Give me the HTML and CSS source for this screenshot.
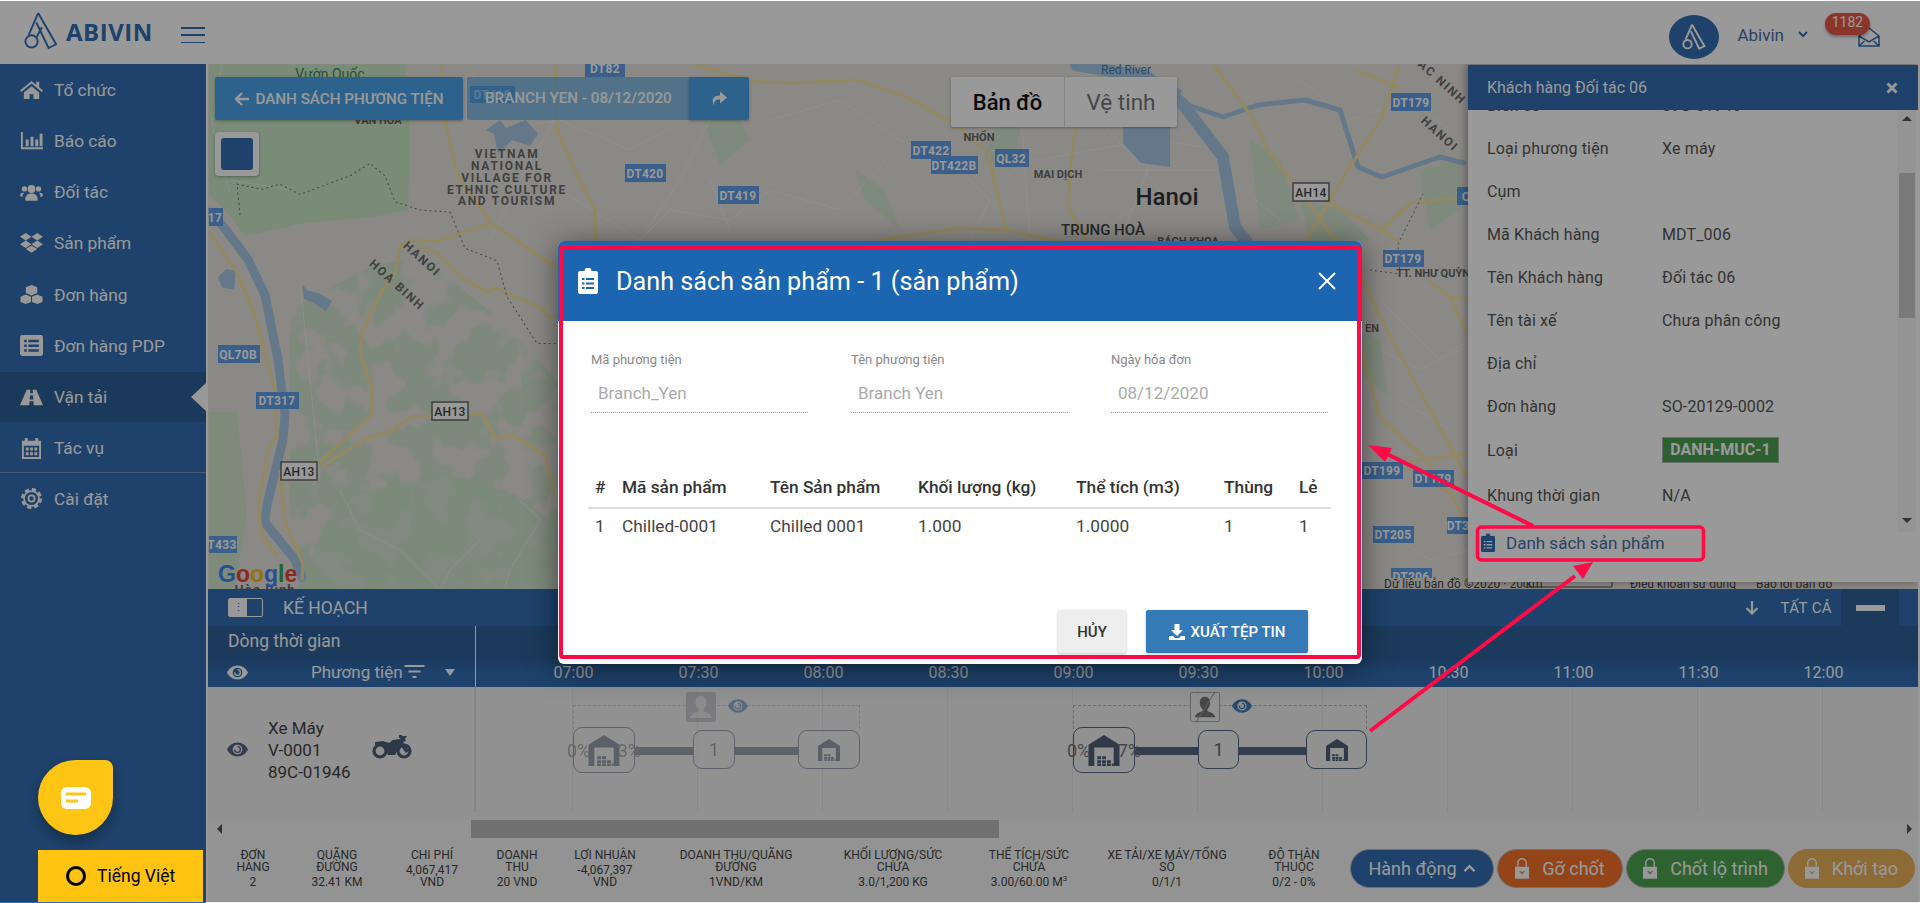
FILE: index.html
```html
<!DOCTYPE html>
<html lang="vi">
<head>
<meta charset="utf-8">
<title>Abivin</title>
<link rel="stylesheet" href="styles.css">
</head>
<body>
<svg class="defs" width="0" height="0" aria-hidden="true">
  <symbol id="i-clip" viewBox="0 0 20 26"><path fill-rule="evenodd" d="M2 3h4.5a3.5 3.5 0 0 1 7 0H18a2 2 0 0 1 2 2v19a2 2 0 0 1-2 2H2a2 2 0 0 1-2-2V5a2 2 0 0 1 2-2zM4 10v2h2.5v-2zM8 10v2h8v-2zM4 14.5v2h2.500v-2zM8 14.500v2h8v-2zM4 19v2h2.500v-2zM8 19v2h8v-2z"/></symbol>
  <symbol id="i-eye" viewBox="0 0 24 16"><path fill-rule="evenodd" d="M12 0c5.500 0 9.800 3.500 12 8-2.200 4.500-6.500 8-12 8S2.200 12.500 0 8c2.200-4.500 6.500-8 12-8zm0 2.500a5.500 5.500 0 1 0 0 11 5.500 5.500 0 0 0 0-11z"/><path d="M12 4a4 4 0 1 1-4 4h1.500A2.500 2.500 0 1 0 12 5.500z"/></symbol>
  <symbol id="i-house" viewBox="0 0 32 32"><path d="M16 0l16 10v22h-6V13H6v19H0V10z"/><path d="M9 22h4v3H9zM14 22h4v3h-4zM9 26h4v3H9zM14 26h4v3h-4zM19 26h4v3h-4zM9 29.500h4V32H9zM14 29.500h4V32h-4zM19 29.500h4V32h-4zM24 29.500h2V32h-2z"/></symbol>
  <symbol id="i-person" viewBox="0 0 30 30"><path d="M15 4c3.500 0 5.500 2.700 5.500 6.500 0 3-1.200 5.500-3 6.800v2.200c3 1 7.500 2 8.500 6.500H4c1-4.500 5.500-5.500 8.500-6.500v-2.200c-1.800-1.300-3-3.800-3-6.800C9.500 6.700 11.500 4 15 4z"/></symbol>
  <symbol id="i-lock" viewBox="0 0 15 22"><path fill="none" stroke="currentColor" stroke-width="1.500" d="M3 9V5a4.500 4.500 0 0 1 9 0v4"/><path d="M0 9h15v13H0zM4.500 14l3 3.500 3-3.500-1-.5-2 2-2-2z" fill-rule="evenodd"/></symbol>
</svg>

<div class="app">
  <header class="topbar">
    <svg class="logo" viewBox="0 0 36 40"><g fill="none" stroke="#326eb2" stroke-width="2"><path d="M15 1L5 24"/><path d="M15 1l19 33-8 4L13 11"/><circle cx="8" cy="31" r="6.500"/><path d="M13 27l6-11"/></g></svg>
    <span class="brand">ABIVIN</span>
    <button class="burger" aria-label="menu"><i></i><i></i><i></i></button>
    <div class="user">
      <span class="avatar"><svg viewBox="0 0 36 40"><g fill="none" stroke="#fff" stroke-width="3"><path d="M15 1L5 24"/><path d="M15 1l19 33-8 4L13 11"/><circle cx="8" cy="31" r="6.500"/></g></svg></span>
      <span class="user-name">Abivin</span>
      <svg class="chev" viewBox="0 0 10 7"><path d="M1 1l4 4 4-4" fill="none" stroke="#326eb2" stroke-width="2"/></svg>
      <span class="mail">
        <svg viewBox="0 0 22 20"><path d="M1 9l10-8 10 8v10H1zM1 9l10 6 10-6M1 19l7-6.500M21 19l-7-6.500" fill="none" stroke="#326eb2" stroke-width="1.500"/></svg>
        <b class="mail-count">1182</b>
      </span>
    </div>
  </header>

  <div class="main">
    <nav class="side">
      <a class="nav"><svg viewBox="0 0 24 20"><path d="M12 1L0 11l1.300 1.600L12 3.700l10.700 8.900L24 11l-4-3.300V2h-3v3.200zM4 13v7h6v-5h4v5h6v-7l-8-6.500z"/></svg>Tổ chức</a>
      <a class="nav"><svg viewBox="0 0 24 20"><path d="M1 1h2v16h21v2H1zM6 9h3v7H6zM11 6h3v10h-3zM16 9h3v7h-3zM20.500 3h3v13h-3z"/></svg>Báo cáo</a>
      <a class="nav"><svg viewBox="0 0 26 18"><circle cx="5" cy="5" r="3"/><circle cx="21" cy="5" r="3"/><circle cx="13" cy="5" r="4.500"/><path d="M6 18c-.5-5 2-8 7-8s7.500 3 7 8c-2 .5-12 .5-14 0zM4.500 9.500C3 11 3 12 3 14c-1.500 0-3-.5-3-1.500 0-2 1.500-3.500 4.500-3zM21.500 9.500c3-.5 4.500 1 4.500 3 0 1-1.500 1.500-3 1.500 0-2 0-3-1.500-4.500z"/></svg>Đối tác</a>
      <a class="nav"><svg viewBox="0 0 22 20"><path d="M5.500 0L0 3.600l5.500 3.500L11 3.600zM16.500 0L11 3.600l5.500 3.500L22 3.600zM0 10.600l5.500 3.600L11 10.600 5.500 7.100zM16.500 14.200L22 10.600l-5.500-3.500-5.500 3.500zM5.500 15.300L11 11.800l5.500 3.500L11 18.900z"/></svg>Sản phẩm</a>
      <a class="nav"><svg viewBox="0 0 24 20"><path d="M12 0l6 2.500v6L12 11 6 8.500v-6zM6 10l5.500 2.300v5.400L6 20 .5 17.700v-5.400zM18 10l5.500 2.300v5.400L18 20l-5.500-2.300v-5.400z"/></svg>Đơn hàng</a>
      <a class="nav"><svg viewBox="0 0 22 20"><path fill-rule="evenodd" d="M2 0h18a2 2 0 0 1 2 2v16a2 2 0 0 1-2 2H2a2 2 0 0 1-2-2V2a2 2 0 0 1 2-2zM4 4.500v2.500h2.500V4.500zM8 4.500v2.500h10V4.500zM4 9v2.500h2.500V9zM8 9v2.500h10V9zM4 13.500V16h2.500v-2.500zM8 13.500V16h10v-2.500z"/></svg>Đơn hàng PDP</a>
      <a class="nav active"><svg viewBox="0 0 24 16"><path fill-rule="evenodd" d="M7 0h3.800l-.2 3.500h2.800L13.200 0H17l7 16h-9.600l-.4-4h-4l-.4 4H0zM10.400 6l-.3 4h3.800l-.3-4z"/></svg>Vận tải</a>
      <a class="nav"><svg viewBox="0 0 20 22"><path fill-rule="evenodd" d="M3 0h3v3h8V0h3v3h3v19H0V3h3zM2 8v12h16V8zM4 10h3v3H4zM8.500 10h3v3h-3zM13 10h3v3h-3zM4 15h3v3H4zM8.500 15h3v3h-3zM13 15h3v3h-3z"/></svg>Tác vụ</a>
      <div class="nav-line"></div>
      <a class="nav"><svg viewBox="0 0 24 24"><circle cx="12" cy="12" r="8.500" fill="none" stroke="currentColor" stroke-width="2"/><circle cx="12" cy="12" r="10.500" fill="none" stroke="currentColor" stroke-width="3" stroke-dasharray="5 3.250"/><circle cx="12" cy="12" r="3.500" fill="none" stroke="currentColor" stroke-width="2"/></svg>Cài đặt</a>
    </nav>

    <div class="work">
      <section class="map">
        <svg class="map-art" viewBox="208 64 1710 525" width="1710" height="525">
          <defs>
            <filter id="mottle" x="0" y="0" width="100%" height="100%" color-interpolation-filters="sRGB">
              <feTurbulence type="fractalNoise" baseFrequency=".03" numOctaves="3" seed="7"/>
              <feColorMatrix values="0 0 0 0 .80  0 0 0 0 .90  0 0 0 0 .79  0 0 0 9 -3.900"/>
              <feComposite in2="SourceGraphic" operator="in"/>
            </filter>
          </defs>
          <rect x="208" y="64" width="1710" height="525" fill="#e6e4df"/>
          <g transform="translate(0,-2.070) scale(1,1.0345)">
            <path class="green" d="M209 64H405l5 66-2 75-38 7-70 6-30 7-25 5-20-25-16-15z"/>
            <path class="green2" d="M209 400l28 0 10 100-15 89h-23z"/>
            <path class="mottled" filter="url(#mottle)" opacity=".8" d="M290 300l80-40 50-10 80 60 58 60v219H300l-10-100z"/>
            <path class="green" d="M345 480l100-20 70 20 43 30v79H300l15-60z" opacity=".55"/>
          </g>
          <path class="green" d="M1000 110l20 20-10 40-25-10zM700 110l30-10 20 40-30 25zM855 170l30 20 15 40-35-30zM1250 140l30 20 20 60-40 10zM1300 200l40 10 30 30-60 2zM1360 330l20 10 8 55-28-20zM1420 170l40-10v50l-30 20z" opacity=".7"/>
          <g class="minor">
            <path d="M222 64l-10 60 8 30 10 40M230 180l60 10M470 70l30 60 60-10 70 30 45-25M560 190l80 50 30-30 60 10 40-30 70 20 55-60M710 180l20 50M640 240l40-60 20-40 20-40M770 120l70-20 60 40 50 20 40 40-20 42M990 150l50 10 50-10 70-10 60 10M1020 100l10 140M1060 70l40 50 60 70-60 40M1100 170h120l60 50M1170 110l-30 80-20 50M1300 80l50 40 60-20 40 30M1380 300l60 60 30-15M1380 350l40 20 50-30M1400 400l50 30M1370 520l60 40 40-10M560 110l-40 70-30 60M300 280l20 200M340 490l20 40 40 20 40 40M480 540l-30 30-10 19M520 500l20 20-30 50-5 19"/>
          </g>
          <g class="water-fill">
            <path d="M1123 127h47v40l-29-4-18-20zM500 120l6 8 20-8 12 14-8 12-18-6-14 14-4-20-8-4zM1160 80l22 10-6 20-18-10z"/>
            <g transform="translate(0,-2.070) scale(1,1.0345)"><path d="M302 277l6 6 10 2 14 8-6 10-12-8-10-4zM226 262l10 2-2 18-12-2-4-10z"/></g>
          </g>
          <g class="water">
            <g transform="translate(0,-2.070) scale(1,1.0345)"><path class="w10" d="M210 207l15 16 23 30 17 34 13 63 7 53-2 24-16 63-2 17 30 36 7 17"/></g>
            <path class="w12" d="M1076 65l71 12 35 26 41 54 12 70 12 15"/>
            <path class="w6" d="M1182 103l41 14 35-12 47-5 35 10 18 57 24 10 58-20 24 6"/>
          </g>
          <g class="road">
            <g transform="translate(0,-2.070) scale(1,1.0345)">
              <path d="M210 227l28 40 17 40 20 73 2 43-9 14-10 53 4 30 15 20"/>
              <path d="M280 457l5 50 18 40-1 16"/>
              <path d="M318 450l54-47v-26l-12-34 2-20 20-40 13-16 5-27 12-6 26 1 54-17-34-45-13-53-3-55"/>
              <path d="M492 218l66 44"/>
              <path d="M322 453l43-26 27-9 20-13 70-3 13 23 17-3 33 21 10 37"/>
              <path d="M418 240l20 7 24 23 26 15 7-5 47 20 6 8h10"/>
            </g>
            <path d="M555 65l2 65 18 40 20 40v30"/>
            <path d="M695 65l29 8 36 9 35 1 64-3 47 17 47 26 35 30 18 77"/>
            <path d="M877 240l82-12 47 2 59 12"/>
            <path d="M1076 127l-5 33-3 47 20 35"/>
            <path d="M1214 65l38 52 18 36 23 30 88 47 18 12"/>
            <path d="M1399 65l-17 52-36 56-41 69"/>
            <path d="M1458 198l-47 5-30 27"/>
            <path d="M1293 183l67 90 20 44 43 80 44 80"/>
            <path d="M1360 343l20 74 50 46 7 24 13 6 13 24"/>
            <path d="M1403 463l64-10"/>
            <path d="M1428 280l22 17 17 36M1450 297l18 2"/>
            <path d="M1355 70l20 8 25 10"/>
          </g>
          <g class="border" transform="translate(0,-2.070) scale(1,1.0345)">
            <path d="M240 210l-3-30 25 5 18-5 20 10 50-18 20-12 15 12 10 25 25 8 30 2 15 35 32 12 10 35 30 45 40 0 22 30 25 15"/>
          </g>
          <g class="border"><path d="M1370 270l30 4-2-30 25-50"/></g>
          <g class="shield">
            <rect x="585" y="60" width="40" height="17"/><text x="605" y="73">DT82</text>
            <rect x="470" y="86" width="45" height="17"/><text x="492" y="99">DT416</text>
            <rect x="625" y="164" width="41" height="18"/><text x="645" y="178">DT420</text>
            <rect x="718" y="186" width="41" height="18"/><text x="738" y="200">DT419</text>
            <rect x="209" y="208" width="14" height="18"/><text x="215" y="222">17</text>
            <rect x="218" y="345" width="42" height="18"/><text x="238" y="359">QL70B</text>
            <rect x="256" y="392" width="43" height="17"/><text x="277" y="405">DT317</text>
            <rect x="209" y="536" width="28" height="17"/><text x="222" y="549">T433</text>
            <rect x="911" y="141" width="40" height="18"/><text x="931" y="155">DT422</text>
            <rect x="931" y="156" width="47" height="18"/><text x="954" y="170">DT422B</text>
            <rect x="995" y="149" width="34" height="18"/><text x="1011" y="163">QL32</text>
            <rect x="1391" y="93" width="40" height="18"/><text x="1411" y="107">DT179</text>
            <rect x="1457" y="187" width="18" height="18"/><text x="1466" y="201">Q</text>
            <rect x="1383" y="250" width="41" height="17"/><text x="1403" y="263">DT179</text>
            <rect x="1362" y="462" width="41" height="17"/><text x="1382" y="475">DT199</text>
            <rect x="1413" y="470" width="41" height="17"/><text x="1433" y="483">DT179</text>
            <rect x="1373" y="526" width="41" height="17"/><text x="1393" y="539">DT205</text>
            <rect x="1447" y="517" width="22" height="17"/><text x="1458" y="530">DT3</text>
            <rect x="1391" y="568" width="41" height="17"/><text x="1411" y="581">DT206</text>
          </g>
          <g class="shield ah">
            <rect x="281" y="462" width="36" height="18"/><text x="299" y="476">AH13</text>
            <rect x="432" y="402" width="36" height="18"/><text x="450" y="416">AH13</text>
            <rect x="1293" y="183" width="36" height="18"/><text x="1311" y="197">AH14</text>
          </g>
          <g class="place">
            <text x="330" y="79" class="park">Vườn Quốc</text>
            <text x="378" y="124">VĂN HÓA</text>
            <text x="507" y="158" class="spaced">VIETNAM</text>
            <text x="507" y="170" class="spaced">NATIONAL</text>
            <text x="507" y="182" class="spaced">VILLAGE FOR</text>
            <text x="507" y="194" class="spaced">ETHNIC CULTURE</text>
            <text x="507" y="205" class="spaced">AND TOURISM</text>
            <text x="422" y="263" class="spaced" transform="rotate(42 422 259)">HANOI</text>
            <text x="397" y="289" class="spaced" transform="rotate(42 397 285)">HOA BINH</text>
            <text x="979" y="141">NHỔN</text>
            <text x="1058" y="178">MAI DỊCH</text>
            <text x="1167" y="205" class="city">Hanoi</text>
            <text x="1103" y="235" class="big">TRUNG HOÀ</text>
            <text x="1188" y="245">BÁCH KHOA</text>
            <text x="1126" y="74" class="river">Red River</text>
            <text x="1437" y="277">TT. NHƯ QUỲNH</text>
            <text x="1372" y="332">EN</text>
            <text x="1436" y="82" class="spaced" transform="rotate(42 1436 82)">BẮC NINH</text>
            <text x="1437" y="137" class="spaced" transform="rotate(42 1437 137)">HANOI</text>
            <text x="265" y="594" class="hoa">Hòa Bình</text>
          </g>
          <text class="google" x="218" y="582"><tspan fill="#4285f4">G</tspan><tspan fill="#ea4335">o</tspan><tspan fill="#fbbc05">o</tspan><tspan fill="#4285f4">g</tspan><tspan fill="#34a853">l</tspan><tspan fill="#ea4335">e</tspan></text>
          <g class="attrib">
            <rect x="1375" y="578" width="543" height="11"/>
            <text x="1384" y="588">Dữ liệu bản đồ ©2020 · 20 km</text>
            <path d="M1524 582v5h88v-5" fill="none" stroke="#444"/>
            <text x="1630" y="588">Điều khoản sử dụng</text>
            <text x="1756" y="588">Báo lỗi bản đồ</text>
          </g>
        </svg>

        <div class="map-tools">
          <div class="route-bar">
            <button class="route-btn back"><svg viewBox="0 0 14 14"><path d="M7 1L1 7l6 6M1 7h13" fill="none" stroke="currentColor" stroke-width="2.400"/></svg>DANH SÁCH PHƯƠNG TIỆN</button>
            <div class="route-name">BRANCH YEN - 08/12/2020</div>
            <button class="route-btn next" aria-label="next"><svg viewBox="0 0 16 14"><path d="M9 0l7 6-7 6V8C5 8 3 9 3 14 0 8 2 4 9 4z" fill="currentColor"/></svg></button>
          </div>
          <span class="layer-btn"><i></i></span>
        </div>

        <div class="map-tabs"><span class="tab on">Bản đồ</span><span class="tab">Vệ tinh</span></div>

        <aside class="panel">
          <div class="panel-body">
            <dl class="panel-rows">
              <div class="prow"><dt>Biển số</dt><dd>89C-01946</dd></div>
              <div class="prow"><dt>Loại phương tiện</dt><dd>Xe máy</dd></div>
              <div class="prow"><dt>Cụm</dt><dd></dd></div>
              <div class="prow"><dt>Mã Khách hàng</dt><dd>MDT_006</dd></div>
              <div class="prow"><dt>Tên Khách hàng</dt><dd>Đối tác 06</dd></div>
              <div class="prow"><dt>Tên tài xế</dt><dd>Chưa phân công</dd></div>
              <div class="prow"><dt>Địa chỉ</dt><dd></dd></div>
              <div class="prow"><dt>Đơn hàng</dt><dd>SO-20129-0002</dd></div>
              <div class="prow"><dt>Loại</dt><dd><span class="tag">DANH-MUC-1</span></dd></div>
              <div class="prow"><dt>Khung thời gian</dt><dd>N/A</dd></div>
            </dl>
            <div class="vscroll"><i class="up"></i><b></b><i class="down"></i></div>
          </div>
          <div class="panel-head"><span>Khách hàng Đối tác 06</span><svg viewBox="0 0 12 12"><path d="M1.500 1.500l9 9M10.500 1.500l-9 9" stroke="#fff" stroke-width="3"/></svg></div>
          <a class="panel-link"><svg><use href="#i-clip"/></svg>Danh sách sản phẩm</a>
        </aside>
      </section>

      <section class="plan">
        <div class="plan-bar">
          <span class="toggle"><i>⋮</i></span>
          <span class="plan-title">KẾ HOẠCH</span>
          <svg class="plan-arrow" viewBox="0 0 14 14"><path d="M7 0v12M1.500 7L7 12.500 12.500 7" fill="none" stroke="#fff" stroke-width="2.200"/></svg>
          <span class="plan-all">TẤT CẢ</span>
          <span class="plan-min"><i></i></span>
        </div>
        <div class="tl-title"><span class="tl-left">Dòng thời gian</span></div>
        <div class="tl-head">
          <div class="tl-veh">
            <svg class="eye-w"><use href="#i-eye"/></svg>
            <span class="veh-label">Phương tiện</span>
            <svg class="filter" viewBox="0 0 20 14"><path d="M0 1h20M4 6.500h12M8 12h4" stroke="#fff" stroke-width="2"/></svg>
            <i class="caret"></i>
          </div>
          <div class="tl-times">
            <span>07:00</span><span>07:30</span><span>08:00</span><span>08:30</span><span>09:00</span><span>09:30</span><span>10:00</span><span>10:30</span><span>11:00</span><span>11:30</span><span>12:00</span>
          </div>
        </div>
        <div class="tl-row">
          <div class="veh">
            <svg class="eye-d"><use href="#i-eye"/></svg>
            <div class="veh-info"><span>Xe Máy</span><span>V-0001</span><span>89C-01946</span></div>
            <svg class="moto" viewBox="0 0 40 24"><g fill="none" stroke="#4e5f78" stroke-width="3.200"><circle cx="8" cy="16" r="6"/><circle cx="32" cy="16" r="6"/></g><path fill="#4e5f78" d="M3 7l8-1 6 2 4-3 7-1 1-3h6l-2 3 1 2-3 1 6 9-3 2-6-8-5 10h-7l-4-8-9-2zM27 0h3v3h-3z"/></svg>
          </div>
          <div class="gantt">
            <div class="trip faded">
              <span class="person"><svg><use href="#i-person"/></svg></span>
              <svg class="trip-eye"><use href="#i-eye"/></svg>
              <i class="bar"></i>
              <span class="stop start"><em class="pl">0%</em><svg><use href="#i-house"/></svg><em class="pr">3%</em></span>
              <span class="stop mid">1</span>
              <span class="stop end"><svg><use href="#i-house"/></svg></span>
            </div>
            <div class="trip live">
              <span class="person off"><svg><use href="#i-person"/></svg></span>
              <svg class="trip-eye"><use href="#i-eye"/></svg>
              <i class="bar"></i>
              <span class="stop start"><em class="pl">0%</em><svg><use href="#i-house"/></svg><em class="pr">7%</em></span>
              <span class="stop mid">1</span>
              <span class="stop end"><svg><use href="#i-house"/></svg></span>
            </div>
          </div>
        </div>
        <div class="hscroll"><i class="left"></i><b></b><i class="right"></i></div>
        <div class="summary">
          <div class="stats">
            <div class="stat"><p><b>ĐƠN<br>HÀNG</b><span>2</span></p></div>
            <div class="stat"><p><b>QUÃNG<br>ĐƯỜNG</b><span>32.41 KM</span></p></div>
            <div class="stat"><p><b>CHI PHÍ</b><span class="gap">4,067,417<br>VND</span></p></div>
            <div class="stat"><p><b>DOANH<br>THU</b><span>20 VND</span></p></div>
            <div class="stat"><p><b>LỢI NHUẬN</b><span class="gap">-4,067,397<br>VND</span></p></div>
            <div class="stat"><p><b>DOANH THU/QUÃNG<br>ĐƯỜNG</b><span>1VND/KM</span></p></div>
            <div class="stat"><p><b>KHỐI LƯỢNG/SỨC<br>CHỨA</b><span>3.0/1,200 KG</span></p></div>
            <div class="stat"><p><b>THỂ TÍCH/SỨC<br>CHỨA</b><span>3.00/60.00 M<sup>3</sup></span></p></div>
            <div class="stat"><p><b>XE TẢI/XE MÁY/TỔNG<br>SỐ</b><span>0/1/1</span></p></div>
            <div class="stat"><p><b>ĐỘ THÂN<br>THUỘC</b><span>0/2 - 0%</span></p></div>
          </div>
          <div class="actions">
            <button class="act a-blue">Hành động<svg viewBox="0 0 14 9"><path d="M1.500 7.500L7 2l5.500 5.500" fill="none" stroke="#fff" stroke-width="2.500"/></svg></button>
            <button class="act a-orange"><svg class="lock"><use href="#i-lock"/></svg>Gỡ chốt</button>
            <button class="act a-green"><svg class="lock"><use href="#i-lock"/></svg>Chốt lộ trình</button>
            <button class="act a-amber"><svg class="lock"><use href="#i-lock"/></svg>Khởi tạo</button>
          </div>
        </div>
      </section>
    </div>
  </div>
</div>

<div class="dim"></div>

<div class="modal">
  <div class="modal-head">
    <svg class="modal-ico"><use href="#i-clip"/></svg>
    <h2>Danh sách sản phẩm - 1 (sản phẩm)</h2>
    <svg class="modal-x" viewBox="0 0 18 18"><path d="M1 1l16 16M17 1L1 17" stroke="#fff" stroke-width="2"/></svg>
  </div>
  <div class="fields">
    <div class="field"><label>Mã phương tiện</label><div class="fval">Branch_Yen</div></div>
    <div class="field"><label>Tên phương tiện</label><div class="fval">Branch Yen</div></div>
    <div class="field"><label>Ngày hóa đơn</label><div class="fval">08/12/2020</div></div>
  </div>
  <table class="items">
    <colgroup><col class="c1"><col class="c2"><col class="c2"><col class="c3"><col class="c2"><col class="c4"><col class="c5"></colgroup>
    <thead><tr><th>#</th><th>Mã sản phẩm</th><th>Tên Sản phẩm</th><th>Khối lượng (kg)</th><th>Thể tích (m3)</th><th>Thùng</th><th>Lẻ</th></tr></thead>
    <tbody><tr><td>1</td><td>Chilled-0001</td><td>Chilled 0001</td><td>1.000</td><td>1.0000</td><td>1</td><td>1</td></tr></tbody>
  </table>
  <div class="modal-foot">
    <button class="btn cancel">HỦY</button>
    <button class="btn export"><svg viewBox="0 0 16 16"><path d="M5.500 0h5v6H14L8 12 2 6h3.500zM0 12h4l2 2h4l2-2h4v4H0z" fill="#fff"/></svg>XUẤT TỆP TIN</button>
  </div>
</div>

<svg class="marks" viewBox="0 0 1920 903" width="1920" height="903" aria-hidden="true">
  <rect class="mark-box" x="561" y="247" width="798" height="410" rx="2"/>
  <rect class="mark-box thin" x="1477.500" y="527" width="226" height="33" rx="4"/>
  <path class="mark-line" d="M1533 526L1385 453"/>
  <path class="mark-head" d="M1368 445l24 3-7 14z"/>
  <path class="mark-line" d="M1370 731L1575 576"/>
  <path class="mark-head" d="M1593 562l-20 4 10 13z"/>
</svg>

<button class="chat" aria-label="chat"><svg viewBox="0 0 30 22"><rect width="30" height="22" rx="6" fill="#fff"/><path d="M5 7h20M5 14h12" stroke="#ffc514" stroke-width="3"/></svg></button>
<button class="lang"><i></i>Tiếng Việt</button>
</body>
</html>
```
FILE: styles.css
```css
* { box-sizing: border-box; }
html, body { margin: 0; height: 903px; overflow: hidden; }
body { font-family: Roboto, "Noto Sans", sans-serif; background: #fff; color: #333; position: relative; width: 1920px; }
button { font: inherit; border: 0; padding: 0; cursor: pointer; }
.defs { position: absolute; }
p, dl, dd, h2 { margin: 0; }

.app { width: 1920px; height: 903px; display: flex; flex-direction: column; }

/* top bar */
.topbar { height: 64px; flex: none; display: flex; align-items: center; padding-left: 24px; background: #fff; }
.logo { width: 34px; height: 38px; margin-top: -2px; }
.brand { margin-left: 8px; font: 700 24px "Open Sans", Roboto, sans-serif; letter-spacing: .5px; color: #326eb2; width: 88px; margin-top: -1px; }
.burger { margin-left: 27px; width: 24px; height: 16px; background: none; display: flex; flex-direction: column; justify-content: space-between; margin-top: 6px; }
.burger i { display: block; height: 1.500px; background: #326eb2; }
.user { margin-left: auto; display: flex; align-items: center; padding-right: 40px; }
.avatar { width: 50px; height: 44px; border-radius: 50%; background: #326eb2; display: flex; align-items: center; justify-content: center; margin-top: 10px; margin-right: 18px; }
.avatar svg { width: 26px; height: 26px; }
.user-name { font-size: 17px; color: #4a6ea8; margin-top: 5px; }
.chev { width: 10px; height: 7px; margin-left: 14px; margin-top: 5px; }
.mail { position: relative; width: 22px; height: 20px; margin-left: 50px; margin-top: 9px; }
.mail svg { width: 22px; height: 20px; display: block; }
.mail-count { position: absolute; left: -33px; top: -14px; width: 45px; height: 22px; border-radius: 11px; background: #ea5a49; color: #fff; font-weight: 400; font-size: 14px; line-height: 19px; text-align: center; box-shadow: 0 2px 3px rgba(0,0,0,.3); }

.main { flex: 1; display: flex; min-height: 0; }

/* sidebar */
.side { width: 206px; margin-right: 2px; flex: none; background: #326eb2; color: #fff; }
.nav { position: relative; height: 51.250px; display: flex; align-items: center; font-size: 17.300px; padding-left: 54px; }
.nav svg { position: absolute; left: 20px; top: 15px; width: 23px; height: 21px; fill: currentColor; }
.nav.active { background: #2e5f96; height: 50px; margin: .6px 0; }
.nav.active::after { content: ""; position: absolute; right: 0; top: 11px; border: 14px solid transparent; border-left: 0; border-right: 15px solid #fff; }
.nav-line { height: 1px; background: rgba(255,255,255,.3); margin-top: -2px; }

/* work area */
.work { width: 1710px; flex: none; display: flex; flex-direction: column; }
.map { position: relative; height: 525px; flex: none; overflow: hidden; }
.map-art { position: absolute; left: 0; top: 0; }
.green { fill: #cbe8c8; }
.green2 { fill: #d2e6cc; }
.mottled { fill: #000; }
.minor path { fill: none; stroke: #f4f4f2; stroke-width: 1; opacity: .7; }
.water-fill path { fill: #a8c9e6; }
.water path { fill: none; stroke: #a8c9e6; stroke-linecap: round; stroke-linejoin: round; }
.w10 { stroke-width: 9; }
.w12 { stroke-width: 12; }
.w6 { stroke-width: 5; }
.road path { fill: none; stroke: #f6e3a2; stroke-width: 3.200; stroke-linejoin: round; }
.border path { fill: none; stroke: #777; stroke-width: 1; stroke-dasharray: 2 3; }
.shield rect { fill: #5f9ee6; }
.shield text { fill: #fff; font: 700 12px Roboto, sans-serif; text-anchor: middle; letter-spacing: .3px; }
.shield.ah rect { fill: #fff; stroke: #666; stroke-width: 1.500; }
.shield.ah text { fill: #444; font-weight: 500; }
.place text { fill: #666; font: 700 11px Roboto, sans-serif; text-anchor: middle; }
.place .spaced { font-size: 12px; letter-spacing: 1.700px; fill: #6c6c6c; }
.place .big { font-size: 15px; font-weight: 500; fill: #444; }
.place .city { font-size: 24px; font-weight: 500; fill: #333; }
.place .river { font-weight: 400; font-size: 12px; fill: #4a7cb5; }
.place .park { font-size: 14px; font-weight: 400; fill: #3d8a5b; }
.place .hoa { font-size: 13px; letter-spacing: 1px; }
.google { font: 700 23px "Liberation Sans", sans-serif; }
.attrib rect { fill: #e6e4df; }
.attrib text { font: 400 12px Roboto, sans-serif; fill: #444; }

.map-tools { position: absolute; left: 7px; top: 13px; display: flex; flex-direction: column; gap: 12px; align-items: flex-start; }
.route-bar { display: flex; gap: 4px; height: 43px; color: #fff; }
.route-btn { height: 43px; background: #4ca3ea; color: #fff; display: flex; align-items: center; justify-content: center; font-weight: 500; font-size: 15.200px; border-radius: 2px; box-shadow: 0 1px 3px rgba(0,0,0,.3); }
.route-btn svg { width: 14px; height: 14px; margin-right: 7px; }
.back { width: 248px; }
.next { width: 60px; margin-left: -4px; border-radius: 0 2px 2px 0; }
.next svg { width: 16px; height: 15px; margin: 0; }
.route-name { width: 222px; background: rgba(78,168,232,.62); font-weight: 500; font-size: 15.200px; line-height: 43px; padding-left: 18px; border-radius: 2px 0 0 2px; }
.layer-btn { width: 44px; height: 44px; background: #fff; border-radius: 4px; padding: 6px; box-shadow: 0 1px 3px rgba(0,0,0,.3); }
.layer-btn i { display: block; width: 32px; height: 32px; background: #326eb2; border-radius: 3px; }

.map-tabs { position: absolute; left: 743px; top: 13px; width: 226px; height: 50px; background: #fff; display: flex; border-radius: 2px; box-shadow: 0 1px 3px rgba(0,0,0,.3); }
.tab { flex: 1; display: flex; align-items: center; justify-content: center; font-size: 22.500px; color: #777; }
.tab.on { flex: none; width: 114px; font-weight: 500; font-size: 22px; color: #111; border-right: 1px solid #ddd; }

/* right panel */
.panel { position: absolute; left: 1260px; top: 1px; width: 450px; height: 517px; background: #fff; display: flex; flex-direction: column; box-shadow: -2px 0 8px rgba(0,0,0,.35); }
.panel-head { order: -1; height: 45px; flex: none; background: #326eb2; color: #fff; font-size: 16px; display: flex; align-items: center; justify-content: space-between; padding: 0 20px 0 19px; }
.panel-head svg { width: 12px; height: 12px; }
.panel-body { position: relative; height: 422px; flex: none; overflow: hidden; }
.panel-rows { margin-top: -26px; }
.prow { height: 43px; display: flex; align-items: center; font-size: 16px; letter-spacing: .15px; padding-left: 19px; color: #555; }
.prow:nth-child(9) { height: 44px; }
.prow:nth-child(10) { height: 46px; }
.prow dt { width: 175px; }
.tag { display: inline-block; height: 26px; width: 117px; border: 1px solid #a6b8a8; background: #4da053; color: #fff; font-weight: 700; font-size: 16px; line-height: 24px; text-align: center; letter-spacing: 0; }
.vscroll { position: absolute; right: 2px; top: 0; bottom: 0; width: 19px; background: #f7f7f7; }
.vscroll b { position: absolute; left: 2px; right: 1px; top: 63px; height: 145px; background: #cbcbcb; }
.up, .down { position: absolute; left: 5px; border: 5px solid transparent; }
.up { top: 6px; border-top: 0; border-bottom: 5px solid #555; }
.down { bottom: 9px; border-bottom: 0; border-top: 5px solid #555; }
.panel-link { display: flex; align-items: center; height: 36px; margin-top: -7px; padding-left: 13px; font-size: 17px; color: #4a6ea8; }
.panel-link svg { width: 14px; height: 20px; margin-right: 11px; fill: #326eb2; }

/* plan */
.plan { flex: 1; display: flex; flex-direction: column; min-height: 0; background: #f2f2f2; }
.plan-bar { height: 37px; flex: none; background: #326eb2; color: #fff; display: flex; align-items: center; padding-left: 20px; }
.toggle { width: 35px; height: 19px; border: 1px solid #fff; border-radius: 2px; position: relative; }
.toggle i { display: block; width: 18px; height: 17px; background: #fff; color: #326eb2; font-style: normal; font-size: 11px; line-height: 17px; text-align: center; }
.plan-title { margin-left: 20px; font-size: 17.500px; }
.plan-arrow { width: 14px; height: 14px; margin-left: auto; margin-right: 21px; }
.plan-all { font-size: 15px; letter-spacing: .4px; }
.plan-min { width: 58px; height: 37px; margin-left: 9px; margin-right: 19px; background: #306199; display: flex; align-items: center; justify-content: center; }
.plan-min i { display: block; width: 29px; height: 6px; background: #fff; }
.tl-title { height: 31px; flex: none; background: #306199; color: #fff; font-size: 17.500px; display: flex; align-items: center; }
.tl-left { width: 268px; height: 100%; line-height: 30px; padding-left: 20px; border-right: 1px solid #fff; }
.tl-head { height: 30px; flex: none; display: flex; background: linear-gradient(#2b5e9a, #326eb2 50%); color: #fff; }
.tl-veh { width: 268px; display: flex; align-items: center; border-right: 1px solid #fff; position: relative; padding-left: 19px; }
.eye-w { width: 21px; height: 15px; fill: #fff; }
.veh-label { margin-left: 63px; font-size: 17px; }
.filter { width: 21px; height: 14px; margin-left: 1px; }
.caret { margin-left: 20px; border: 5.500px solid transparent; border-bottom: 0; border-top: 7px solid #fff; }
.tl-times { display: flex; padding-left: 35px; font-size: 16px; align-items: center; }
.tl-times span { width: 125px; text-align: center; color: #fff; }
.tl-row { height: 125px; flex: none; display: flex; }
.veh { width: 268px; flex: none; display: flex; align-items: center; border-right: 2px solid #dcdcdc; padding-left: 19px; }
.eye-d { width: 21px; height: 15px; fill: #556680; }
.veh-info { display: flex; flex-direction: column; margin-left: 20px; width: 104px; font-size: 17px; line-height: 22px; color: #444; margin-top: 1px; }
.moto { width: 40px; height: 24px; margin-top: -6px; }
.gantt { position: relative; flex: 1; background-image: repeating-linear-gradient(90deg, #e4e4e4 0 1px, transparent 1px 125px); background-repeat: no-repeat; background-position: 96px 0; background-size: 1400px 100%; }
.trip { position: absolute; top: 18px; border: 1px dashed #b5b5b5; border-bottom: 0; height: 24px; }
.faded { left: 97px; width: 287px; opacity: .55; }
.live { left: 597px; width: 294px; }
.person { position: absolute; top: -14px; width: 30px; height: 30px; background: #aab; display: block; border-radius: 2px; }
.person svg { width: 30px; height: 30px; fill: #e3e3e3; display: block; }
.person.off { background: #f2f2f2; border: 1px solid #aaa; }
.person.off svg { width: 28px; height: 28px; fill: #777; }
.person.off::after { content: ""; position: absolute; left: 14px; top: -4px; width: 1px; height: 36px; background: #999; transform: rotate(32deg); }
.faded .person { left: 112px; }
.live .person { left: 116px; }
.trip-eye { position: absolute; top: -7px; width: 20px; height: 14px; fill: #3f7fb8; }
.faded .trip-eye { left: 154px; }
.live .trip-eye { left: 158px; }
.bar { position: absolute; left: 40px; right: 40px; top: 41px; height: 8px; background: #556680; }
.stop { position: absolute; background: #f2f2f2; border: 1px solid #556680; border-radius: 9px; display: flex; align-items: center; justify-content: center; color: #556680; font-size: 18px; top: 24px; height: 39px; }
.stop svg { fill: #4f5f78; width: 22px; height: 22px; }
.stop.start { left: -1px; top: 21px; height: 46px; width: 62px; }
.stop.start svg { width: 32px; height: 31px; }
.stop em { position: absolute; font-style: normal; font-size: 18px; color: #777; }
.pl { left: -7px; }
.pr { right: -7px; }
.faded .mid { left: 119px; width: 42px; }
.faded .end { left: 224px; width: 62px; }
.live .mid { left: 124px; width: 41px; }
.live .end { left: 232px; width: 61px; }

.hscroll { position: relative; height: 18px; margin-top: 8px; flex: none; background: #f5f5f5; }
.hscroll b { position: absolute; left: 263px; width: 528px; top: 0; bottom: 0; background: #bbb; }
.left, .right { position: absolute; top: 4px; border: 5px solid transparent; }
.left { left: 9px; border-left: 0; border-right: 5px solid #555; }
.right { right: 6px; border-right: 0; border-left: 5px solid #555; }

.summary { flex: 1; display: flex; background: #f5f5f5; position: relative; padding-bottom: 8px; }
.stats { display: grid; grid-template-columns: 90px 78px 112px 58px 118px 144px 170px 102px 174px 80px; width: 1126px; padding-top: 11px; }
.stat { display: flex; justify-content: center; font-size: 12px; line-height: 12px; color: #444; }
.stat p { flex: none; text-align: center; white-space: nowrap; }
.stat b { display: block; font-weight: 400; }
.stat span { display: block; margin-top: 3px; }
.stat sup { font-size: 8px; line-height: 0; }
.actions { position: absolute; left: 1142px; top: 11px; display: flex; gap: 3px; height: 39px; }
.act { height: 39px; border-radius: 20px; color: #fff; font-size: 18px; display: flex; align-items: center; justify-content: center; border: 1px solid #bbb; }
.act svg { fill: #fff; color: #fff; }
.a-blue { width: 144px; background: #326eb2; }
.a-blue svg { width: 13px; height: 9px; margin-left: 6px; }
.a-orange { width: 126px; background: #f5732b; }
.a-green { width: 159px; background: #4da653; }
.a-amber { width: 127px; background: #ecb25c; border-color: #ecb25c; color: #fff; }
.lock { width: 14px; height: 21px; margin-right: 13px; }

/* overlay */
.dim { position: absolute; left: 0; right: 0; top: 1px; bottom: 1px; background: rgba(0,0,0,.4); }

/* modal */
.modal { position: absolute; left: 558px; top: 241px; width: 804px; height: 423px; background: #fff; border-radius: 6px; box-shadow: 0 4px 30px rgba(0,0,0,.5); display: flex; flex-direction: column; }
.modal-head { height: 80px; flex: none; background: #1c65b0; border-radius: 6px 6px 0 0; color: #fff; display: flex; align-items: center; padding: 0 26px 0 20px; }
.modal-ico { width: 20px; height: 26px; fill: #fff; }
.modal-head h2 { font-size: 25.200px; font-weight: 400; margin-left: 18px; }
.modal-x { width: 18px; height: 18px; margin-left: auto; }
.fields { display: grid; grid-template-columns: repeat(3, 217px); column-gap: 43px; padding: 32px 0 0 33px; }
.field label { display: block; font-size: 13px; line-height: 14px; color: #888; }
.fval { margin-top: 9px; height: 37px; line-height: 35px; font-size: 17px; color: #aaa; padding-left: 7px; border-bottom: 1px dotted #999; }
.items { margin: 55px 0 0 30px; width: 743px; border-collapse: collapse; table-layout: fixed; font-size: 17.300px; color: #333; }
.c1 { width: 27px; }
.c2 { width: 148px; }
.c3 { width: 158px; }
.c4 { width: 75px; }
.c5 { width: 39px; }
.items th { height: 40px; padding: 0 0 2px 7px; text-align: left; font-weight: 500; border-bottom: 2px solid #ddd; white-space: nowrap; }
.items td { height: 34px; padding: 0 0 0 7px; white-space: nowrap; color: #444; }
.modal-foot { margin-top: auto; padding: 0 54px 11px 0; display: flex; justify-content: flex-end; gap: 20px; }
.btn { height: 43px; font-weight: 500; font-size: 15px; border-radius: 2px; display: flex; align-items: center; justify-content: center; box-shadow: 0 1px 3px rgba(0,0,0,.25); }
.cancel { width: 68px; background: #eee; color: #333; }
.export { width: 162px; background: #337ab7; color: #fff; }
.export svg { width: 16px; height: 16px; margin-right: 6px; }

/* annotations */
.marks { position: absolute; left: 0; top: 0; pointer-events: none; }
.mark-box { fill: none; stroke: #ff0a47; stroke-width: 4; }
.mark-box.thin { stroke-width: 3.500; }
.mark-line { fill: none; stroke: #ff0a47; stroke-width: 4; }
.mark-head { fill: #ff0a47; }

/* floating */
.chat { position: absolute; left: 38px; top: 760px; width: 75px; height: 75px; background: #ffc514; border-radius: 50% 8px 50% 50%; box-shadow: 0 6px 12px rgba(0,0,0,.3); display: flex; align-items: center; justify-content: center; }
.chat svg { width: 30px; height: 22px; }
.lang { position: absolute; left: 38px; top: 850px; width: 165px; height: 52px; background: #ffc412; color: #000; font-size: 17.500px; display: flex; align-items: center; padding-left: 28px; text-align: left; }
.lang i { width: 20px; height: 20px; border: 3px solid #000; border-radius: 50%; margin-right: 11px; }
```
